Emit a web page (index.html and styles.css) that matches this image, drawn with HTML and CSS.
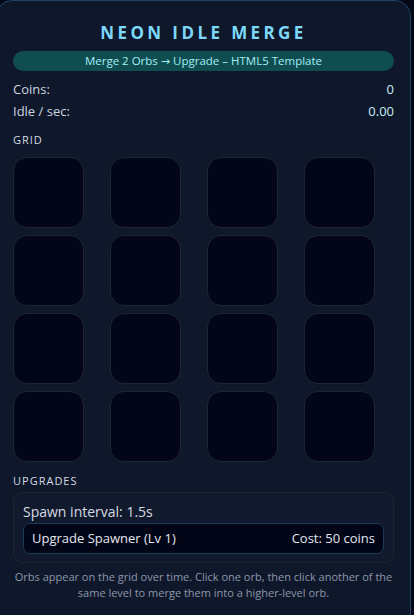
FILE: index.html
```html
<!DOCTYPE html>
<html lang="en">
<head>
    <meta charset="UTF-8">
    <meta name="viewport" content="width=device-width, initial-scale=1.0">
    <title>Neon Idle Merge</title>
    <link rel="stylesheet" href="styles.css">
</head>
<body>
    <div class="panel">
        <h1>NEON IDLE MERGE</h1>
        <div class="tagline">Merge 2 Orbs <span class="arrow">→</span> Upgrade – HTML5 Template</div>

        <div class="stats">
            <div class="stat-row"><span>Coins:</span><span class="value" id="coins">0</span></div>
            <div class="stat-row"><span>Idle / sec:</span><span class="value" id="idle">0.00</span></div>
        </div>

        <div class="section-title">GRID</div>
        <div class="grid" id="grid">
            <div class="cell"></div><div class="cell"></div><div class="cell"></div><div class="cell"></div>
            <div class="cell"></div><div class="cell"></div><div class="cell"></div><div class="cell"></div>
            <div class="cell"></div><div class="cell"></div><div class="cell"></div><div class="cell"></div>
            <div class="cell"></div><div class="cell"></div><div class="cell"></div><div class="cell"></div>
        </div>

        <div class="section-title">UPGRADES</div>
        <div class="upgrades">
            <div class="spawn-info">Spawn interval: <span id="interval">1.5s</span></div>
            <button class="upgrade-btn" id="upgrade-btn">
                <span>Upgrade Spawner (Lv 1)</span>
                <span>Cost: 50 coins</span>
            </button>
        </div>

        <p class="help">Orbs appear on the grid over time. Click one orb, then click another of the same level to merge them into a higher-level orb.</p>
    </div>
</body>
</html>
```

FILE: styles.css
```css
body {
    background-color: #030814;
    font-family: "Open Sans", "Noto Sans", sans-serif;
    color: #cbd5e1;
    margin: 0;
    padding: 0;
}

.panel {
    margin: 0 3px 0 -4px;
    padding: 20px 16px 16px;
    min-height: 640px;
    background-color: #0f172a;
    border: 1px solid #1d4468;
    border-radius: 16px;
}

h1 {
    margin: 0 0 6px;
    text-align: center;
    font-size: 17px;
    font-weight: bold;
    letter-spacing: 0.2em;
    color: #7dd8fb;
    line-height: 24px;
}

.tagline {
    background-color: #0f4d50;
    color: #a5eef5;
    border-radius: 999px;
    text-align: center;
    font-size: 11.5px;
    line-height: 19px;
}

.arrow {
    font-family: "DejaVu Sans", sans-serif;
    font-size: 11px;
}

.stats {
    margin-top: 9px;
    display: flex;
    flex-direction: column;
    gap: 4px;
}

.stat-row {
    display: flex;
    justify-content: space-between;
    font-size: 13px;
    line-height: 18px;
}

.stat-row .value {
    color: #c7eef8;
}

.section-title {
    margin-top: 12px;
    font-size: 11px;
    letter-spacing: 1px;
    color: #d5dbe4;
    line-height: 16px;
}

.grid {
    margin-top: 9px;
    display: grid;
    grid-template-columns: repeat(4, 71px);
    grid-auto-rows: 71px;
    column-gap: 26px;
    row-gap: 7px;
}

.cell {
    background-color: #020617;
    border: 1px solid #1c2536;
    border-radius: 14px;
}

.grid + .section-title {
    margin-top: 11px;
}

.upgrades {
    margin-top: 3px;
    padding: 10px 9px 8px;
    background-color: #111a2c;
    border: 1px solid #1c2536;
    border-radius: 9px;
}

.spawn-info {
    font-size: 14px;
    line-height: 18px;
    color: #d5dbe4;
}

.upgrade-btn {
    margin-top: 2px;
    width: 100%;
    display: flex;
    justify-content: space-between;
    padding: 6px 8px;
    background-color: #020617;
    border: 1px solid #1b3a55;
    border-radius: 7px;
    color: #e2e8f0;
    font-family: inherit;
    font-size: 13px;
    line-height: 17px;
    cursor: pointer;
}

.help {
    margin: 6px 0 0;
    text-align: center;
    font-size: 11px;
    line-height: 16px;
    color: #8c98aa;
}
```
